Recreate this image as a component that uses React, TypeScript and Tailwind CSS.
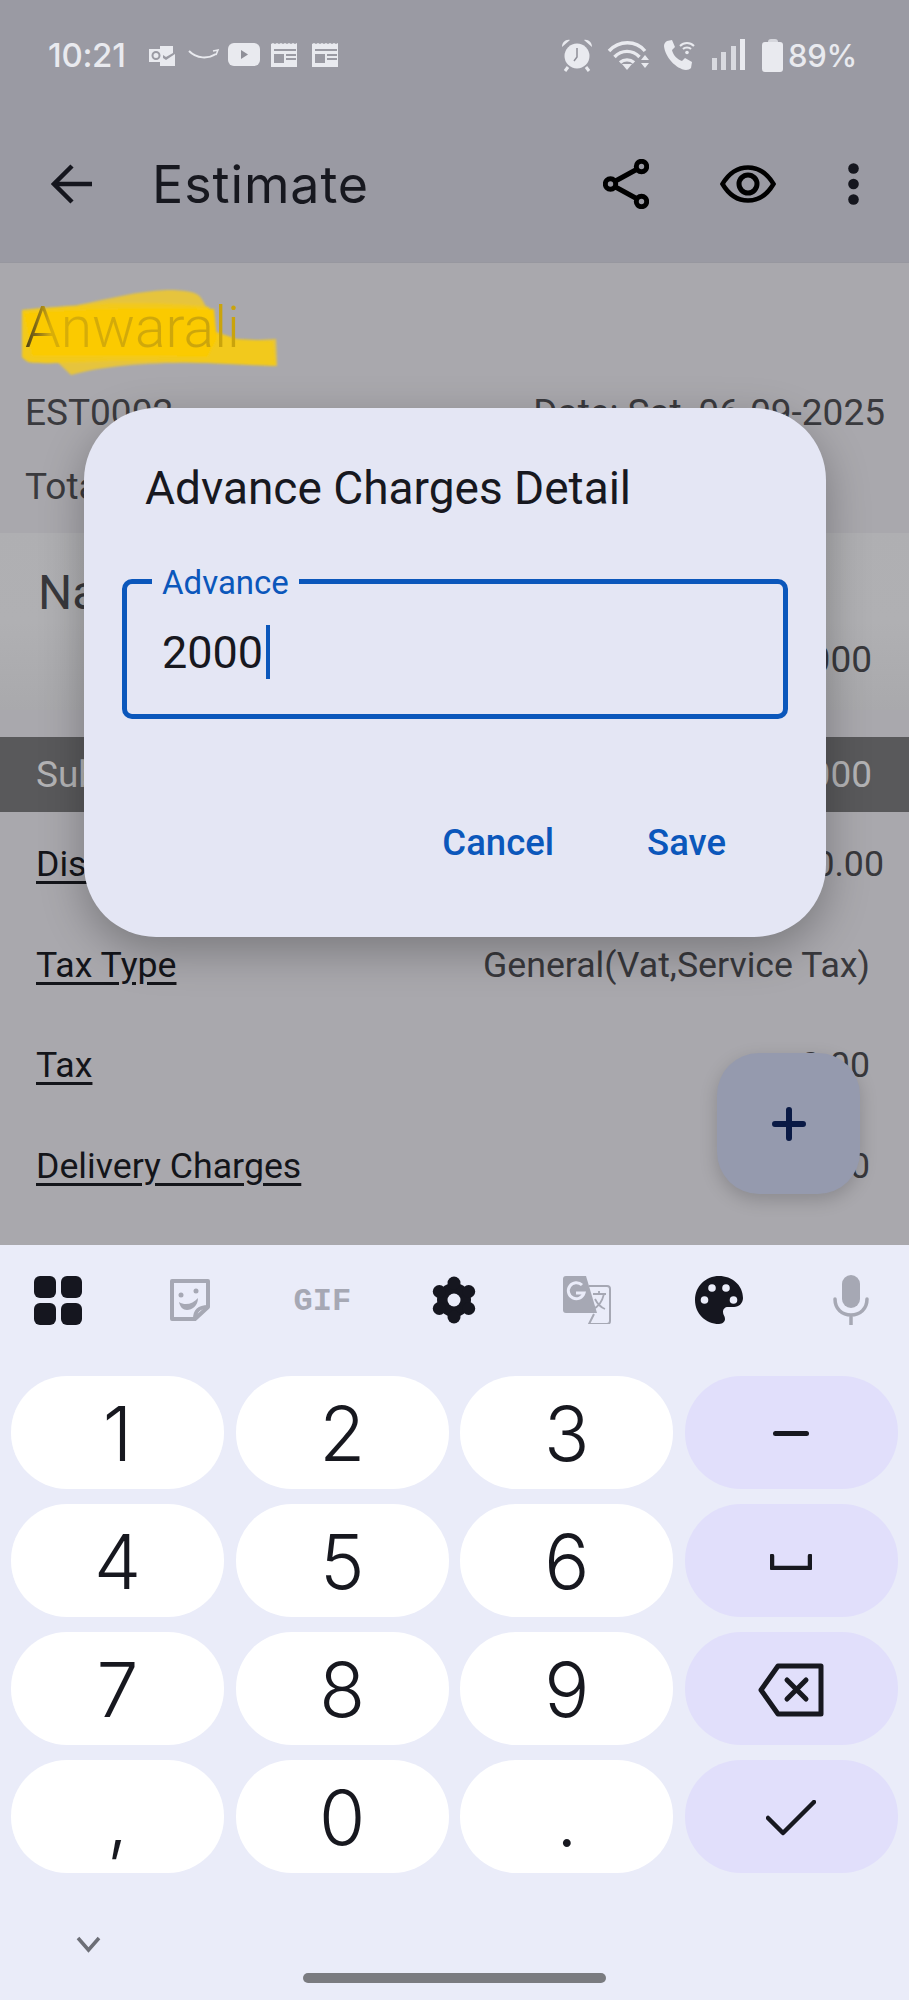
import type { ReactNode } from 'react';

const ink = '#e9eaef';

function StatusLeftIcons() {
  return (
    <div className="ml-[22px] flex items-center">
      <svg width="30" height="24" viewBox="0 0 30 24" fill={ink}>
        <path d="M12 3h13v7l-7 4-6-4z" />
        <path d="M12 13l6 4 9-6v12H12z" />
        <rect x="1" y="6" width="14" height="13" fill={ink} />
        <circle cx="8" cy="12.5" r="3.5" fill="none" stroke="#9a9aa3" strokeWidth="2" />
      </svg>
      <svg className="ml-[10px]" width="32" height="14" viewBox="0 0 32 14" fill="none" stroke={ink}>
        <path d="M1 3c8 8 19 8 27 3" strokeWidth="2" />
        <path d="M25 3l5-1-2 5" strokeWidth="1.5" />
      </svg>
      <svg className="ml-[8px]" width="32" height="24" viewBox="0 0 32 24">
        <rect width="32" height="23" rx="6" fill={ink} />
        <path d="M13 7l7 4.5-7 4.5z" fill="#8f8f98" />
      </svg>
      <News className="ml-[11px]" />
      <News className="ml-[13px]" />
    </div>
  );
}

function News({ className }: { className?: string }) {
  return (
    <svg className={className} width="28" height="24" viewBox="0 0 28 24">
      <path d="M0 1l2-1 2 1 2-1 2 1 2-1 2 1 2-1 2 1 2-1 2 1 2-1 2 1 2-1v24H0z" fill={ink} />
      <rect x="3" y="6" width="22" height="2" fill="#9a9aa3" />
      <rect x="3" y="11" width="10" height="9" fill="#9a9aa3" />
      <rect x="15" y="11" width="10" height="2" fill="#9a9aa3" />
      <rect x="15" y="15" width="10" height="2" fill="#9a9aa3" />
    </svg>
  );
}

function StatusRightIcons() {
  return (
    <div className="flex items-center">
      <svg width="32" height="34" viewBox="0 0 32 34">
        <circle cx="16" cy="18" r="12.5" fill={ink} />
        <path d="M1 9c0-5 4-8 8-7zM31 9c0-5-4-8-8-7z" fill={ink} />
        <path d="M7 29l-3 4M25 29l3 4" stroke={ink} strokeWidth="3" />
        <path d="M16 10v9l-3 4" stroke="#8f8f98" strokeWidth="1.5" fill="none" />
      </svg>
      <svg className="ml-[14px]" width="44" height="31" viewBox="0 0 44 31" fill="none" stroke={ink} strokeWidth="3.4">
        <path d="M2 11c10-11 27-11 36 0" />
        <path d="M7.500 17c7-7.500 18-7.500 25 0" />
        <path d="M13 22.500c4-3.500 10-3.500 14 0" />
        <path d="M15 24h10l-5 6z" fill={ink} stroke="none" />
        <path d="M34 20l4-5 4 5zM34 23h8l-4 5z" fill={ink} stroke="none" />
      </svg>
      <svg className="ml-[13px]" width="32" height="30" viewBox="0 0 32 30" fill="none">
        <path
          d="M3 1l5-1 3 7-3 3c1 5 5 9 10 11l3-3 7 4-1 6c-1 1-3 2-5 2C12 29 1 17 0 6c0-2 1-4 3-5z"
          fill={ink}
        />
        <path d="M16 6c4-4 10-4 14 0M19 9c2-2 6-2 8 0" stroke={ink} strokeWidth="2" />
        <circle cx="23" cy="12.500" r="1.800" fill={ink} />
      </svg>
      <div className="ml-[16px] flex h-[30px] items-end gap-[4.500px]">
        <span className="h-[12px] w-[5px] bg-[#d9dae0]" />
        <span className="h-[18px] w-[5px] bg-[#d9dae0]" />
        <span className="h-[24px] w-[5px] bg-[#d9dae0]" />
        <span className="h-[31px] w-[5px] bg-[#e9eaef]" />
      </div>
      <div className="ml-[17px] flex flex-col items-center">
        <span className="h-[3px] w-[10px] rounded-t-sm bg-[#d6d7dd]" />
        <span className="h-[30px] w-[21px] rounded-[3px] bg-[#e9eaef]" />
      </div>
      <span className="ml-[5px] text-[31px] leading-none font-medium tracking-[-0.3px] text-[#e9eaef]">89%</span>
    </div>
  );
}

function AppBar() {
  return (
    <header className="h-[263px] border-b border-[#97979f] bg-[#9a9aa3] shadow-[0_2px_6px_rgba(0,0,0,0.08)]">
      <div className="flex h-[110px] items-center justify-between pr-[52px] pl-[48px]">
        <div className="flex items-center">
          <span className="text-[33px] leading-none font-medium tracking-[-0.3px] text-[#e9eaef]">10:21</span>
          <StatusLeftIcons />
        </div>
        <StatusRightIcons />
      </div>
      <div className="flex h-[147px] items-center pr-[50px] pl-[51px]">
        <svg width="41" height="40" viewBox="0 0 41 40" fill="none" stroke="#15161e" strokeWidth="4.500">
          <path d="M41 20H4" />
          <path d="M21 2L3 20l18 18" />
        </svg>
        <h1 className="ml-[60px] pt-[2px] text-[52px] leading-none font-normal tracking-[0.9px] text-[#17181f]">Estimate</h1>
        <svg className="ml-auto" width="46" height="50" viewBox="0 0 46 50" fill="none" stroke="#000" strokeWidth="5">
          <circle cx="7.500" cy="25" r="5.200" />
          <circle cx="38.500" cy="7.500" r="5.200" />
          <circle cx="38.500" cy="42.500" r="5.200" />
          <path d="M12.500 22L33.500 10.500M12.500 28L33.500 39.500" />
        </svg>
        <svg className="ml-[71px]" width="56" height="38" viewBox="0 0 56 38" fill="none" stroke="#000" strokeWidth="4.500">
          <path d="M2.500 19C9 8 18 2.500 28 2.500S47 8 53.500 19C47 30 38 35.500 28 35.500S9 30 2.500 19z" />
          <circle cx="28" cy="19" r="9" strokeWidth="5" />
        </svg>
        <svg className="ml-[72px]" width="11" height="42" viewBox="0 0 11 42" fill="#15161e">
          <circle cx="5.500" cy="5.500" r="5.300" />
          <circle cx="5.500" cy="21" r="5.300" />
          <circle cx="5.500" cy="36.500" r="5.300" />
        </svg>
      </div>
    </header>
  );
}

function Scribble() {
  return (
    <svg className="absolute top-[22px] left-[18px]" width="264" height="92" viewBox="0 0 264 92">
      <defs>
        <filter id="soft">
          <feGaussianBlur stdDeviation="1.2" />
        </filter>
      </defs>
      <g filter="url(#soft)">
        <path d="M60 20C90 14 120 6 149 5c18 0 31 2 34 8 4 6 8 14 9 22l-132 6zM30 68l228-14 1 27c-70-5-155-6-206 9z" fill="#e6c43c" />
        <path d="M4 25C30 22 55 21 95 18c30 0 70 0 96 4l4 24 24 8 36 2 3 25c-60-2-128-8-188-4-30 1-50 2-60 0-4-3-4-3-6-5z" fill="#f2c91a" />
        <path d="M6 28c60-4 120-6 190-4l3 30-10 18c-60-2-120 0-175-1z" fill="#fbca00" />
      </g>
    </svg>
  );
}

function Row({ label, value, right = 'pr-[39px]' }: { label: string; value: string; right?: string }) {
  return (
    <div className={`flex h-[100.5px] items-center justify-between pl-[36px] ${right}`}>
      <span className="text-[35.700px] leading-none text-[#14151a] underline underline-offset-[5px]">{label}</span>
      <span className="text-[35.700px] leading-none text-[#38383c]">{value}</span>
    </div>
  );
}

function EstimateBody() {
  return (
    <main className="h-[982px] bg-[#a9a8ad] font-['Roboto',sans-serif]">
      <section className="relative h-[270px] pr-[24px] pl-[25px]">
        <Scribble />
        <div className="relative pt-[35px] text-[57px] leading-[60px] font-light">
          <span className="bg-gradient-to-r from-[#4a3f14] via-[#d8ae08] via-[12%] to-[#c9a30c] bg-clip-text text-transparent">Anwarali</span>
        </div>
        <div className="mt-[35px] flex justify-between text-[37px] leading-[40px] text-[#3a3a3e]">
          <span>EST0002</span>
          <span>Date: Sat, 06-09-2025</span>
        </div>
        <div className="mt-[34px] text-[37px] leading-[40px] text-[#3a3a3e]">Total</div>
      </section>
      <section className="h-[177px] bg-gradient-to-b from-[#afafb2] via-[#b0b0b3] to-[#a9a9ac] pr-[37px] pl-[38px]">
        <div className="pt-[30px] text-[48px] leading-[60px] text-[#38383c]">Name</div>
        <div className="mt-[17px] text-right text-[37px] leading-[40px] text-[#38383c]">2000</div>
      </section>
      <div className="mt-[27px] flex h-[75px] items-center justify-between bg-[#59595b] pr-[37px] pl-[36px] text-[37px] text-[#b3b3b5]">
        <span>Sub Total</span>
        <span>2000</span>
      </div>
      <div className="pt-[3px]">
        <Row label="Discount" value="0.00" right="pr-[25px]" />
        <Row label="Tax Type" value="General(Vat,Service Tax)" />
        <Row label="Tax" value="0.00" />
        <Row label="Delivery Charges" value="0.00" />
      </div>
    </main>
  );
}

function AdvanceDialog() {
  return (
    <div className="absolute top-[408px] left-[84px] h-[529px] w-[742px] rounded-[72px] bg-[#e4e6f4] pr-[38px] pl-[38px] font-['Roboto',sans-serif] shadow-[0_14px_44px_rgba(0,0,0,0.28)]">
      <h2 className="pt-[52px] pl-[23px] text-[46px] leading-[56px] font-normal text-[#17181f]">Advance Charges Detail</h2>
      <div className="relative mt-[63px] flex h-[140px] items-center rounded-[10px] border-[5px] border-[#0b57bb] pt-[6px] pl-[35px]">
        <span className="absolute top-[-20px] left-[25px] bg-[#e4e6f4] px-[10px] text-[33px] leading-[38px] text-[#0b57bb]">
          Advance
        </span>
        <span className="text-[45px] leading-none text-[#17181f]">2000</span>
        <span className="ml-[3px] h-[54px] w-[4px] bg-[#0b57bb]" />
      </div>
      <div className="mt-[98px] flex justify-end gap-[93px] pr-[62px] text-[36.500px] leading-[52px] font-medium text-[#0b57bb]">
        <span>Cancel</span>
        <span>Save</span>
      </div>
    </div>
  );
}

function KbToolbar() {
  const gray = '#a6a8b4';
  const dark = '#15161f';
  return (
    <div className="flex h-[110px] items-center justify-between pr-[34px] pl-[34px]">
      <div className="grid w-[48px] grid-cols-2 gap-[5px]">
        <span className="h-[22px] rounded-[6px] bg-[#15161f]" />
        <span className="h-[22px] rounded-[6px] bg-[#15161f]" />
        <span className="h-[22px] rounded-[6px] bg-[#15161f]" />
        <span className="h-[22px] rounded-[6px] bg-[#15161f]" />
      </div>
      <svg width="48" height="44" viewBox="0 0 48 44" fill="none">
        <path d="M6 3h36v26L29 41H6z" stroke={gray} strokeWidth="4" strokeLinejoin="round" />
        <path d="M29 41c0-8 3-12 13-12" stroke={gray} strokeWidth="4" />
        <circle cx="15" cy="17" r="2.500" fill={gray} />
        <circle cx="30" cy="13" r="2.500" fill={gray} />
        <path d="M13 24c6 4 14 2 19-4 0 8-6 12-11 12-4 0-7-3-8-8z" fill={gray} />
      </svg>
      <div className="flex w-[48px] shrink-0 justify-center pt-[4px] font-['Liberation_Mono',monospace] text-[32px] leading-none font-bold text-[#a6a8b4]">
        GIF
      </div>
      <svg width="48" height="48" viewBox="0 0 48 48" fill={dark}>
        <circle cx="24" cy="24" r="17" />
        <circle cx="24" cy="7" r="6.500" />
        <circle cx="24" cy="41" r="6.500" />
        <circle cx="9.300" cy="15.500" r="6.500" />
        <circle cx="38.700" cy="15.500" r="6.500" />
        <circle cx="9.300" cy="32.500" r="6.500" />
        <circle cx="38.700" cy="32.500" r="6.500" />
        <circle cx="24" cy="24" r="6.500" fill="#eaecf9" />
      </svg>
      <svg width="48" height="48" viewBox="0 0 48 48" fill="none">
        <path d="M3 0h23l4 10h14c2 0 3 1 3 3v32c0 2-1 3-3 3H26l-4-11H3c-2 0-3-1-3-3V3c0-2 1-3 3-3z" fill="#eaecf9" />
        <path d="M3 0h20l11 37H3c-2 0-3-1-3-3V3c0-2 1-3 3-3z" fill={gray} />
        <path d="M26 10h18c2 0 3 1 3 3v32c0 2-1 3-3 3H26l5-10" stroke={gray} strokeWidth="2" />
        <path d="M19 9a8 8 0 1 0 2 8h-8" stroke="#eaecf9" strokeWidth="3" />
        <path d="M30 18h13M36 15v3M41 18c-2 8-6 13-11 15M32 23c2 4 5 8 10 10" stroke={gray} strokeWidth="1.800" />
      </svg>
      <svg width="48" height="48" viewBox="0 0 48 48" fill={dark}>
        <path d="M24 0C11 0 0 10 0 24s11 24 24 24c4 0 6-3 6-5 0-3-2-4-2-7 0-3 2-5 5-5h6c5 0 9-4 9-9C48 9 37 0 24 0z" />
        <circle cx="9.500" cy="24" r="3.800" fill="#eaecf9" />
        <circle cx="17" cy="12" r="3.800" fill="#eaecf9" />
        <circle cx="31" cy="12" r="3.800" fill="#eaecf9" />
        <circle cx="38.500" cy="24" r="3.800" fill="#eaecf9" />
      </svg>
      <svg width="48" height="50" viewBox="0 0 48 50" fill="none">
        <rect x="15" y="0" width="18" height="33" rx="9" fill={gray} />
        <path d="M8 24c0 10 7 16 16 16s16-6 16-16M24 40v10" stroke={gray} strokeWidth="3.500" strokeLinecap="round" />
      </svg>
    </div>
  );
}

function Key({ children, accent }: { children: ReactNode; accent?: boolean }) {
  return (
    <div
      className={`flex h-[113px] items-center justify-center rounded-[56px] pt-[2px] text-[75px] leading-none font-light text-[#17181f] ${
        accent ? 'bg-[#e1dffb]' : 'bg-white'
      }`}
    >
      {children}
    </div>
  );
}

function Keyboard() {
  return (
    <footer className="relative h-[755px] bg-[#eaecf9] font-['Inter',sans-serif]">
      <KbToolbar />
      <div className="mt-[21px] grid grid-cols-4 gap-x-[11.500px] gap-y-[15px] px-[11px]">
        <Key>1</Key>
        <Key>2</Key>
        <Key>3</Key>
        <Key accent>
          <span className="h-[5px] w-[36px] rounded-full bg-[#17181f]" />
        </Key>
        <Key>4</Key>
        <Key>5</Key>
        <Key>6</Key>
        <Key accent>
          <svg width="42" height="16" viewBox="0 0 42 16" fill="none" stroke="#17181f" strokeWidth="4.500" strokeLinecap="round">
            <path d="M2 2v12h38V2" strokeLinejoin="round" />
          </svg>
        </Key>
        <Key>7</Key>
        <Key>8</Key>
        <Key>9</Key>
        <Key accent>
          <svg width="66" height="54" viewBox="0 0 66 54" fill="none" stroke="#17181f" strokeWidth="5" strokeLinejoin="round" strokeLinecap="round">
            <path d="M20 3h43v48H20L3 27z" />
            <path d="M29 17l19 19M48 17L29 36" />
          </svg>
        </Key>
        <Key>
          <span className="relative top-[2px]">,</span>
        </Key>
        <Key>0</Key>
        <Key>
          <span className="relative top-[2px]">.</span>
        </Key>
        <Key accent>
          <svg width="50" height="36" viewBox="0 0 50 36" fill="none" stroke="#17181f" strokeWidth="4.500" strokeLinecap="round" strokeLinejoin="round">
            <path d="M2 18l15 15L48 2" />
          </svg>
        </Key>
      </div>
      <div className="mt-[63px] flex pl-[76px]">
        <svg width="25" height="17" viewBox="0 0 25 17" fill="none" stroke="#6c6e76" strokeWidth="3.500">
          <path d="M2 2l10.500 12L23 2" />
        </svg>
      </div>
      <div className="mt-[20px] flex justify-center">
        <span className="h-[10px] w-[303px] rounded-full bg-[#7a7b80]" />
      </div>
    </footer>
  );
}

export default function App() {
  return (
    <div className="relative h-[2000px] w-[909px] overflow-hidden font-['Inter',sans-serif]">
      <AppBar />
      <EstimateBody />
      <AdvanceDialog />
      <div className="absolute top-[1053px] left-[717px] flex h-[141px] w-[143px] items-center justify-center rounded-[42px] bg-[#959aae] shadow-[0_6px_18px_rgba(0,0,0,0.18)]">
        <svg width="34" height="34" viewBox="0 0 34 34" fill="none" stroke="#0a1a45" strokeWidth="6" strokeLinecap="round">
          <path d="M17 3v28M3 17h28" />
        </svg>
      </div>
      <Keyboard />
    </div>
  );
}
